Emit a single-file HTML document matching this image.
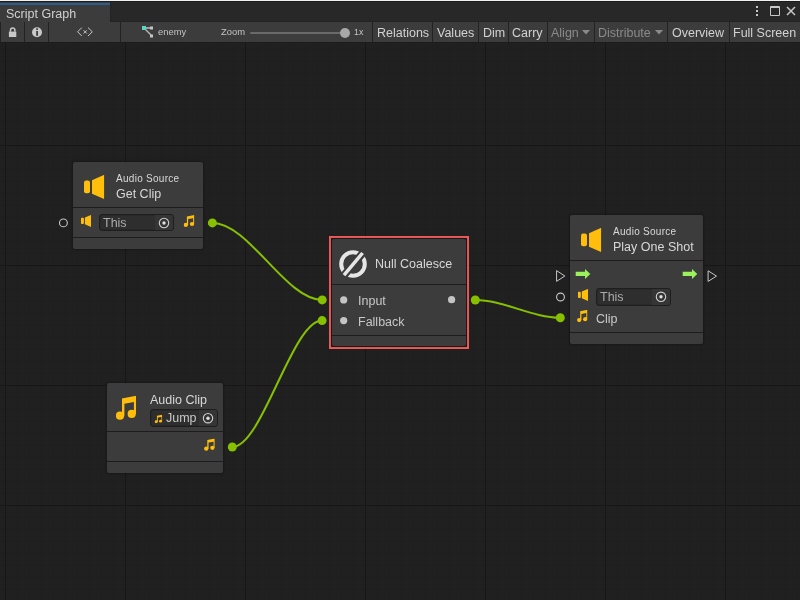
<!DOCTYPE html>
<html><head><meta charset="utf-8">
<style>
*{margin:0;padding:0;box-sizing:border-box}
html,body{width:800px;height:600px;overflow:hidden;background:#202020;font-family:"Liberation Sans",sans-serif}
.abs{position:absolute}
.t{position:absolute;white-space:nowrap;line-height:1;color:#d2d2d2;will-change:transform}
.btn{position:absolute;top:22px;height:20px;background:#3c3c3c}
.sep{position:absolute;top:22px;width:1px;height:20px;background:#232323}
.node{position:absolute;background:#3c3c3c;border-radius:2px;box-shadow:0 0 2px 1px rgba(0,0,0,0.25)}
.div{position:absolute;left:0;right:0;height:1px;background:#1d1d1d}
.field{position:absolute;background:#2e2e2e;border:1px solid #1e1e1e;border-radius:3px;box-shadow:inset 0 0 0 1px #292929}
.tgt{position:absolute;top:0;bottom:0;right:0;background:#353535;border-radius:0 2px 2px 0}
</style></head><body>
<svg class="abs" style="left:0;top:0" width="800" height="600">
  <defs>
    <pattern id="minor" x="5" y="1" width="12" height="12" patternUnits="userSpaceOnUse">
      <rect x="0" y="0" width="1" height="12" fill="#1e1e1e"/>
      <rect x="0" y="0" width="12" height="1" fill="#1e1e1e"/>
    </pattern>
    <pattern id="major" x="5" y="25" width="120" height="120" patternUnits="userSpaceOnUse">
      <rect x="0" y="0" width="1" height="120" fill="#171717"/>
      <rect x="0" y="0" width="120" height="1" fill="#171717"/>
    </pattern>
  </defs>
  <rect x="0" y="42" width="800" height="558" fill="#202020"/>
  <rect x="0" y="42" width="800" height="558" fill="url(#minor)"/>
  <rect x="0" y="42" width="800" height="558" fill="url(#major)"/>
</svg>

<!-- tab bar -->
<div class="abs" style="left:0;top:0;width:800px;height:22px;background:#282828"></div>
<div class="abs" style="left:0;top:0;width:800px;height:1px;background:#f0f0f0"></div>
<div class="abs" style="left:0;top:1px;width:800px;height:1px;background:#1c1c1c"></div>
<div class="abs" style="left:0;top:21px;width:800px;height:1px;background:#232323"></div>
<div class="abs" style="left:0;top:2px;width:110px;height:20px;background:#3c3c3c"></div>
<div class="abs" style="left:110px;top:2px;width:1px;height:20px;background:#232323"></div>
<div class="abs" style="left:0;top:3px;width:110px;height:2px;background:#2c5d8f"></div>
<div class="t" style="left:6px;top:8px;font-size:12.5px;color:#d0d0d0">Script Graph</div>
<!-- window icons -->
<div class="abs" style="left:756px;top:6px;width:2px;height:2px;background:#c8c8c8"></div>
<div class="abs" style="left:756px;top:10px;width:2px;height:2px;background:#c8c8c8"></div>
<div class="abs" style="left:756px;top:14px;width:2px;height:2px;background:#c8c8c8"></div>
<div class="abs" style="left:770px;top:6px;width:10px;height:10px;border:1px solid #c8c8c8;border-top-width:2px;border-radius:1px"></div>
<svg class="abs" style="left:786px;top:6px" width="10" height="10"><path d="M1 1L9 9M9 1L1 9" stroke="#c8c8c8" stroke-width="1.5"/></svg>

<!-- toolbar -->
<div class="abs" style="left:0;top:22px;width:800px;height:20px;background:#3c3c3c"></div>
<div class="abs" style="left:0;top:42px;width:800px;height:1px;background:#1c1c1c"></div>
<div class="sep" style="left:0"></div>
<div class="sep" style="left:24px"></div>
<div class="sep" style="left:48px"></div>
<div class="sep" style="left:120px"></div>
<div class="sep" style="left:372px"></div>
<div class="sep" style="left:432px"></div>
<div class="sep" style="left:478px"></div>
<div class="sep" style="left:508px"></div>
<div class="sep" style="left:547px"></div>
<div class="sep" style="left:594px"></div>
<div class="sep" style="left:667px"></div>
<div class="sep" style="left:729px"></div>
<!-- lock -->
<svg class="abs" style="left:0;top:22px" width="50" height="20"><path d="M10.5 9.8V8.3A2.2 2.2 0 0 1 14.9 8.3V9.8" fill="none" stroke="#c8c8c8" stroke-width="1.5"/><rect x="8.9" y="9.6" width="7.4" height="5.4" fill="#c8c8c8"/></svg>
<!-- info -->
<svg class="abs" style="left:31px;top:27px" width="12" height="12"><circle cx="6" cy="5.2" r="5" fill="#c8c8c8"/><rect x="5.2" y="1.3" width="1.8" height="1.6" fill="#3c3c3c"/><rect x="5.2" y="4" width="1.8" height="4.8" fill="#3c3c3c"/></svg>
<!-- <x> -->
<svg class="abs" style="left:70px;top:22px" width="30" height="20"><path d="M11.8 5.6L7.6 9.8L11.8 14M18 5.6L22.3 9.8L18 14M13.6 8.3L16.8 11.5M16.8 8.3L13.6 11.5" fill="none" stroke="#c8c8c8" stroke-width="1"/></svg>
<!-- graph icon -->
<svg class="abs" style="left:141px;top:25px" width="14" height="14"><path d="M3 3L11 3M3 3L11 11" stroke="#bdbdbd" stroke-width="1.3"/><rect x="1" y="1" width="4" height="4" fill="#5cd6c0"/><rect x="9" y="1.5" width="3" height="3" fill="#c4c4c4"/><rect x="9" y="9.5" width="3" height="3" fill="#c4c4c4"/></svg>
<div class="t" style="left:158px;top:27px;font-size:9.4px;color:#c4c4c4">enemy</div>
<div class="t" style="left:221px;top:27px;font-size:9.4px;color:#c4c4c4">Zoom</div>
<div class="abs" style="left:250px;top:32px;width:94px;height:2px;background:#6a6a6a;border-radius:1px"></div>
<div class="abs" style="left:340px;top:28px;width:10px;height:10px;background:#a8a8a8;border-radius:50%"></div>
<div class="t" style="left:354px;top:27.5px;font-size:8.8px;color:#c4c4c4">1x</div>
<div class="t" style="left:377px;top:27px;font-size:12.5px;color:#d2d2d2">Relations</div>
<div class="t" style="left:437px;top:27px;font-size:12.5px;color:#d2d2d2">Values</div>
<div class="t" style="left:483px;top:27px;font-size:12.5px;color:#d2d2d2">Dim</div>
<div class="t" style="left:512px;top:27px;font-size:12.5px;color:#d2d2d2">Carry</div>
<div class="t" style="left:551px;top:27px;font-size:12.5px;color:#8a8a8a">Align</div>
<svg class="abs" style="left:582px;top:30px" width="9" height="5"><path d="M0 0H8L4 4.5Z" fill="#8a8a8a"/></svg>
<div class="t" style="left:598px;top:27px;font-size:12.5px;color:#8a8a8a">Distribute</div>
<svg class="abs" style="left:655px;top:30px" width="9" height="5"><path d="M0 0H8L4 4.5Z" fill="#8a8a8a"/></svg>
<div class="t" style="left:672px;top:27px;font-size:12.5px;color:#d2d2d2">Overview</div>
<div class="t" style="left:733px;top:27px;font-size:12.5px;color:#d2d2d2">Full Screen</div>

<!-- curves -->
<svg class="abs" style="left:0;top:0" width="800" height="600">
  <g fill="none" stroke="#86c000" stroke-width="2">
    <path d="M212.4 222.9C249 222.9 285.6 299.9 322.2 299.9"/>
    <path d="M232.3 447C262.3 447 292.1 320.6 322.1 320.6"/>
    <path d="M475.3 300C503.6 300 532 317.8 560.3 317.8"/>
  </g>
  <g fill="#86c000">
    <circle cx="212.4" cy="222.9" r="4.5"/>
    <circle cx="322.2" cy="299.9" r="4.5"/>
    <circle cx="322.1" cy="320.6" r="4.5"/>
    <circle cx="232.3" cy="447" r="4.5"/>
    <circle cx="475.3" cy="300" r="4.5"/>
    <circle cx="560.3" cy="317.8" r="4.5"/>
  </g>
</svg>

<!-- Node 1: Audio Source Get Clip -->
<div class="node" style="left:73px;top:162px;width:130px;height:87px">
  <div class="div" style="top:45px"></div>
  <div class="div" style="top:75px"></div>
</div>

<!-- Node 2: Null Coalesce -->
<div class="abs" style="left:329px;top:236px;width:140px;height:113px;border:2px solid #ef5a5a"></div>
<div class="node" style="left:332px;top:239px;width:134px;height:107px">
  <div class="div" style="top:45px"></div>
  <div class="div" style="top:96px"></div>
</div>

<!-- Node 3: Play One Shot -->
<div class="node" style="left:570px;top:215px;width:133px;height:129px">
  <div class="div" style="top:45px"></div>
  <div class="div" style="top:117px"></div>
</div>

<!-- Node 4: Audio Clip -->
<div class="node" style="left:107px;top:383px;width:116px;height:90px">
  <div class="div" style="top:48px"></div>
  <div class="div" style="top:78px"></div>
</div>


<!-- fields -->
<div class="field" style="left:99px;top:214px;width:75px;height:17px"><div class="tgt" style="width:18px"></div></div>
<div class="field" style="left:596px;top:288px;width:75px;height:18px"><div class="tgt" style="width:18px"></div></div>
<div class="field" style="left:150px;top:409px;width:68px;height:18px"><div class="tgt" style="width:18px"></div></div>

<svg class="abs" style="left:0;top:0" width="800" height="600">
  
  <!-- node1 -->
  <svg x="84" y="174.8" width="20.3" height="24.3" viewBox="0 0 20.3 24.3" preserveAspectRatio="none"><rect x="0" y="5.6" width="6" height="12.8" rx="2" fill="#ffbe0b"/>
      <path d="M8 5.4L20.3 0V24.3L8 18.9Z" fill="#ffbe0b"/></svg>
  <svg x="80.9" y="214.9" width="10.2" height="12.1" viewBox="0 0 20.3 24.3" preserveAspectRatio="none"><rect x="0" y="5.6" width="6" height="12.8" rx="2" fill="#ffbe0b"/>
      <path d="M8 5.4L20.3 0V24.3L8 18.9Z" fill="#ffbe0b"/></svg>
  <svg x="183.6" y="215" width="10.8" height="12" viewBox="0 0 20.4 24.3" preserveAspectRatio="none"><path d="M6.2 2.8L20.3 0V18.2H18.1V6.4L8.6 8V20H6.2Z" fill="#ffbe0b"/>
      <circle cx="4.2" cy="20" r="4.1" fill="#ffbe0b"/>
      <circle cx="15.9" cy="18.2" r="4.1" fill="#ffbe0b"/></svg>
  <circle cx="63.4" cy="222.9" r="3.9" fill="none" stroke="#c8c8c8" stroke-width="1.1"/>
  <svg x="158" y="217" width="12" height="12" viewBox="0 0 12 12" preserveAspectRatio="none"><circle cx="6" cy="6" r="4.7" fill="none" stroke="#d0d0d0" stroke-width="1.1"/>
      <circle cx="6" cy="6" r="1.7" fill="#e0e0e0"/></svg>
  <!-- node2 -->
  <circle cx="353" cy="264" r="11.8" fill="none" stroke="#e6e6e6" stroke-width="4"/>
  <path d="M343.2 276.2L363.6 252" stroke="#3c3c3c" stroke-width="7.6"/>
  <path d="M344 275.2L362.6 253" stroke="#e6e6e6" stroke-width="3.5"/>
  <circle cx="343.7" cy="299.9" r="3.6" fill="#c4c4c4"/>
  <circle cx="343.7" cy="320.6" r="3.6" fill="#c4c4c4"/>
  <circle cx="451.6" cy="299.7" r="3.6" fill="#c4c4c4"/>
  <!-- node3 -->
  <svg x="581" y="227.8" width="20.3" height="24.3" viewBox="0 0 20.3 24.3" preserveAspectRatio="none"><rect x="0" y="5.6" width="6" height="12.8" rx="2" fill="#ffbe0b"/>
      <path d="M8 5.4L20.3 0V24.3L8 18.9Z" fill="#ffbe0b"/></svg>
  <path d="M556.6 270.6L564.8 276L556.6 281.4Z" fill="none" stroke="#c8c8c8" stroke-width="1"/>
  <path d="M708.1 270.8L716.5 276.1L708.1 281.4Z" fill="none" stroke="#c8c8c8" stroke-width="1"/>
  <path d="M575.7 271.8H585V269L590.3 274L585 279V276.1H575.7Z" fill="#9cf05c"/>
  <path d="M682.7 271.8H692V269L697.3 274L692 279V276.1H682.7Z" fill="#9cf05c"/>
  <circle cx="560.5" cy="297" r="3.9" fill="none" stroke="#c8c8c8" stroke-width="1.1"/>
  <svg x="577.8" y="288.9" width="10.2" height="12.1" viewBox="0 0 20.3 24.3" preserveAspectRatio="none"><rect x="0" y="5.6" width="6" height="12.8" rx="2" fill="#ffbe0b"/>
      <path d="M8 5.4L20.3 0V24.3L8 18.9Z" fill="#ffbe0b"/></svg>
  <svg x="577" y="309.8" width="10.5" height="12.5" viewBox="0 0 20.4 24.3" preserveAspectRatio="none"><path d="M6.2 2.8L20.3 0V18.2H18.1V6.4L8.6 8V20H6.2Z" fill="#ffbe0b"/>
      <circle cx="4.2" cy="20" r="4.1" fill="#ffbe0b"/>
      <circle cx="15.9" cy="18.2" r="4.1" fill="#ffbe0b"/></svg>
  <svg x="655" y="290.8" width="12" height="12" viewBox="0 0 12 12" preserveAspectRatio="none"><circle cx="6" cy="6" r="4.7" fill="none" stroke="#d0d0d0" stroke-width="1.1"/>
      <circle cx="6" cy="6" r="1.7" fill="#e0e0e0"/></svg>
  <!-- node4 -->
  <svg x="115.8" y="395.7" width="20.4" height="24.3" viewBox="0 0 20.4 24.3" preserveAspectRatio="none"><path d="M6.2 2.8L20.3 0V18.2H18.1V6.4L8.6 8V20H6.2Z" fill="#ffbe0b"/>
      <circle cx="4.2" cy="20" r="4.1" fill="#ffbe0b"/>
      <circle cx="15.9" cy="18.2" r="4.1" fill="#ffbe0b"/></svg>
  <svg x="154.6" y="414.8" width="7.7" height="8.5" viewBox="0 0 20.4 24.3" preserveAspectRatio="none"><path d="M6.2 2.8L20.3 0V18.2H18.1V6.4L8.6 8V20H6.2Z" fill="#ffbe0b"/>
      <circle cx="4.2" cy="20" r="4.1" fill="#ffbe0b"/>
      <circle cx="15.9" cy="18.2" r="4.1" fill="#ffbe0b"/></svg>
  <svg x="204" y="438.5" width="10.8" height="12.4" viewBox="0 0 20.4 24.3" preserveAspectRatio="none"><path d="M6.2 2.8L20.3 0V18.2H18.1V6.4L8.6 8V20H6.2Z" fill="#ffbe0b"/>
      <circle cx="4.2" cy="20" r="4.1" fill="#ffbe0b"/>
      <circle cx="15.9" cy="18.2" r="4.1" fill="#ffbe0b"/></svg>
  <svg x="202" y="412.2" width="12" height="12" viewBox="0 0 12 12" preserveAspectRatio="none"><circle cx="6" cy="6" r="4.7" fill="none" stroke="#d0d0d0" stroke-width="1.1"/>
      <circle cx="6" cy="6" r="1.7" fill="#e0e0e0"/></svg>
</svg>

<!-- node texts -->
<div class="t" style="left:116px;top:173.5px;font-size:10px;letter-spacing:0.28px;color:#d8d8d8">Audio Source</div>
<div class="t" style="left:116px;top:188px;font-size:12.5px;color:#d8d8d8">Get Clip</div>
<div class="t" style="left:103px;top:217px;font-size:12.5px;color:#ababab">This</div>
<div class="t" style="left:375px;top:258px;font-size:12.5px;color:#d8d8d8">Null Coalesce</div>
<div class="t" style="left:358px;top:295px;font-size:12.5px;color:#c8c8c8">Input</div>
<div class="t" style="left:358px;top:316px;font-size:12.5px;color:#c8c8c8">Fallback</div>
<div class="t" style="left:613px;top:226.5px;font-size:10px;letter-spacing:0.28px;color:#d8d8d8">Audio Source</div>
<div class="t" style="left:613px;top:241px;font-size:12.5px;color:#d8d8d8">Play One Shot</div>
<div class="t" style="left:600px;top:291px;font-size:12.5px;color:#ababab">This</div>
<div class="t" style="left:596px;top:313px;font-size:12.5px;color:#c8c8c8">Clip</div>
<div class="t" style="left:150px;top:394px;font-size:12.5px;color:#d8d8d8">Audio Clip</div>
<div class="t" style="left:166px;top:412px;font-size:12.5px;color:#c8c8c8">Jump</div>

</body></html>
